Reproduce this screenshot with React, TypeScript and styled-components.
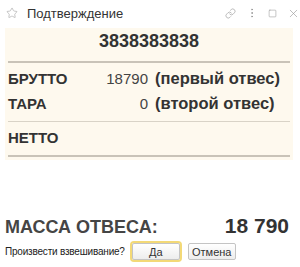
import { FC } from 'react';
import styled, { createGlobalStyle } from 'styled-components';
import { Star, Link, EllipsisVertical, Square, X } from 'lucide-react';

const App: FC = () => {
  return (
    <Root>
      <GlobalStyle />
      <TitleBar>
        <Star size={12} strokeWidth={1.3} color="#a8a8a8" />
        <Title>Подтверждение</Title>
        <TitleIcons>
          <Link size={11} strokeWidth={1.4} color="#9a9a9a" />
          <EllipsisVertical size={12} strokeWidth={1.8} color="#9a9a9a" />
          <Square size={9} strokeWidth={1.5} color="#9a9a9a" />
          <X size={13} strokeWidth={1.2} color="#9a9a9a" />
        </TitleIcons>
      </TitleBar>
      <Panel>
        <Code>3838383838</Code>
        <Divider $thick />
        <Rows>
          <Label>БРУТТО</Label>
          <Value>18790</Value>
          <Note>(первый отвес)</Note>
          <Label>ТАРА</Label>
          <Value>0</Value>
          <Note>(второй отвес)</Note>
        </Rows>
        <Divider />
        <Rows>
          <Label>НЕТТО</Label>
        </Rows>
        <Divider $thick />
      </Panel>
      <MassRow>
        <MassLabel>МАССА ОТВЕСА:</MassLabel>
        <MassValue>18 790</MassValue>
      </MassRow>
      <QuestionRow>
        <Question>Произвести взвешивание?</Question>
        <Button $focused>Да</Button>
        <Button>Отмена</Button>
      </QuestionRow>
    </Root>
  );
};

export default App;

const GlobalStyle = createGlobalStyle`
  body {
    margin: 0;
    background: #fff;
    font-family: "Liberation Sans", Arial, sans-serif;
  }
`;

const Root = styled.div`
  width: 300px;
  height: 267px;
  overflow: hidden;
  display: flex;
  flex-direction: column;
`;

const TitleBar = styled.div`
  display: flex;
  align-items: center;
  height: 26px;
  padding: 0 0 0 6px;
`;

const Title = styled.div`
  margin-left: 9px;
  font-size: 13px;
  color: #333;
`;

const TitleIcons = styled.div`
  margin-left: auto;
  display: flex;
  align-items: center;
  gap: 10px;
`;

const Panel = styled.div`
  margin: 2px 7px 0 5px;
  padding: 0 3px 3px;
  background: #fef9ee;
`;

const Code = styled.div`
  padding: 3px 0 10px;
  text-align: center;
  font-size: 18px;
  line-height: 20px;
  font-weight: bold;
  color: #333;
`;

const Divider = styled.div<{ $thick?: boolean }>`
  height: ${({ $thick }) => ($thick ? '2px' : '1px')};
  background: ${({ $thick }) => ($thick ? '#c9c3b8' : '#d9d3c7')};
`;

const Rows = styled.div`
  display: grid;
  grid-template-columns: 89px 44px auto;
  column-gap: 7px;
  padding: 3px 0 5px;
  font-size: 15px;
  line-height: 25px;
  color: #333;
`;

const Label = styled.div`
  font-weight: bold;
`;

const Value = styled.div`
  text-align: right;
  color: #444;
`;

const Note = styled.div`
  font-size: 16.5px;
  font-weight: bold;
`;

const MassRow = styled.div`
  margin-top: auto;
  display: flex;
  align-items: baseline;
  justify-content: space-between;
  padding: 0 11px 0 5px;
`;

const MassLabel = styled.div`
  font-size: 18px;
  font-weight: bold;
  color: #454545;
`;

const MassValue = styled.div`
  font-size: 21px;
  font-weight: bold;
  color: #333;
`;

const QuestionRow = styled.div`
  display: flex;
  align-items: center;
  gap: 7px;
  padding: 5px 0 7px 5px;
`;

const Question = styled.div`
  font-size: 10px;
  letter-spacing: -0.2px;
  color: #222;
`;

const Button = styled.button<{ $focused?: boolean }>`
  width: 48px;
  height: 17px;
  padding: 0;
  margin-left: ${({ $focused }) => ($focused ? '0' : '1px')};
  border: 1px solid #c4c4c4;
  border-radius: 2px;
  background: linear-gradient(#ffffff, #ededed);
  box-shadow: ${({ $focused }) => ($focused ? '0 0 0 2px #f3d977' : 'none')};
  font-family: "Liberation Sans", Arial, sans-serif;
  font-size: 11px;
  color: #333;
`;
